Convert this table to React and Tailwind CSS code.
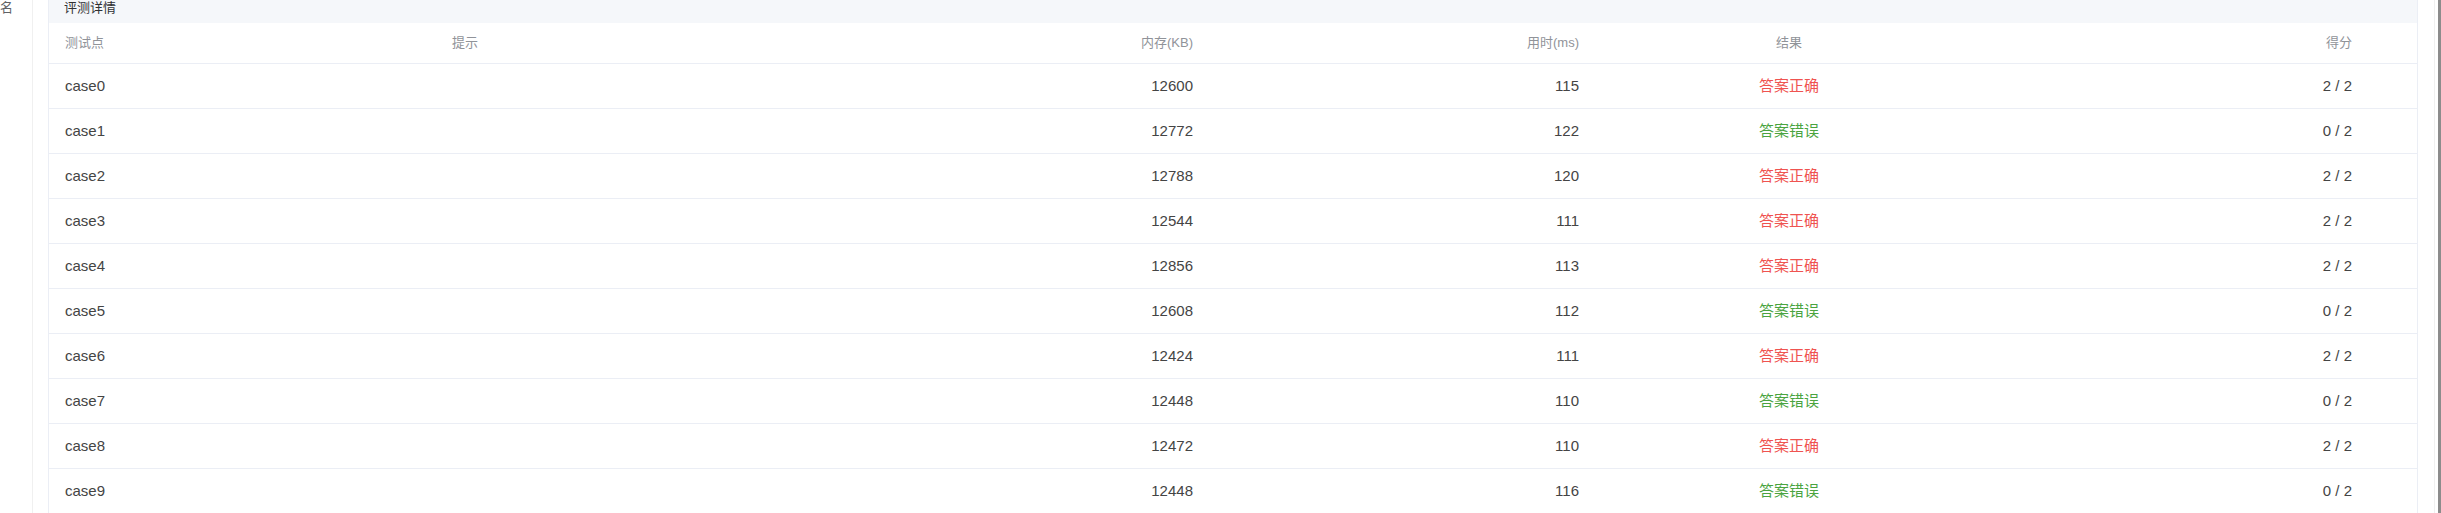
import React from "react";

const rows = [
  ["case0", "12600", "115", true, "2 / 2"],
  ["case1", "12772", "122", false, "0 / 2"],
  ["case2", "12788", "120", true, "2 / 2"],
  ["case3", "12544", "111", true, "2 / 2"],
  ["case4", "12856", "113", true, "2 / 2"],
  ["case5", "12608", "112", false, "0 / 2"],
  ["case6", "12424", "111", true, "2 / 2"],
  ["case7", "12448", "110", false, "0 / 2"],
  ["case8", "12472", "110", true, "2 / 2"],
  ["case9", "12448", "116", false, "0 / 2"],
];

const grid = "grid grid-cols-[387px_400px_373px_386px_388px_1fr] items-center";

export default function App() {
  return (
    <div
      className="h-[513px] w-[2441px] overflow-hidden bg-white flex"
      style={{ fontFamily: '"Liberation Sans", "Noto Sans CJK SC", sans-serif' }}
    >
      <div className="w-[33px] shrink-0 border-r border-[#f0f0f0] text-[13px] leading-[16px] text-[#606266]">
        名
      </div>
      <div className="w-[15px] shrink-0" />
      <div className="w-[2370px] shrink-0 border-x border-[#ebeef5]">
        <div className="h-[23px] bg-[#f5f7fa] pl-[15px] text-[13px] leading-[16px] text-[#303133]">
          评测详情
        </div>
        <div className={`${grid} h-[41px] border-b border-[#ebeef5] text-[13px] text-[#909399]`}>
          <div className="pl-[16px]">测试点</div>
          <div className="pl-[16px]">提示</div>
          <div className="pr-[16px] text-right">内存(KB)</div>
          <div className="pr-[16px] text-right">用时(ms)</div>
          <div className="text-center">结果</div>
          <div className="pr-[65px] text-right">得分</div>
        </div>
        {rows.map(([name, mem, time, ok, score]) => (
          <div
            key={name}
            className={`${grid} h-[45px] border-b border-[#ebeef5] text-[15px] text-[#444444]`}
          >
            <div className="pl-[16px]">{name}</div>
            <div className="pl-[16px]"></div>
            <div className="pr-[16px] text-right">{mem}</div>
            <div className="pr-[16px] text-right">{time}</div>
            <div className={`text-center ${ok ? "text-[#ef5350]" : "text-[#4aa440]"}`}>
              {ok ? "答案正确" : "答案错误"}
            </div>
            <div className="pr-[65px] text-right">{score}</div>
          </div>
        ))}
      </div>
      <div className="flex-1" />
      <div className="w-[7px] shrink-0 border-l border-[#f0f0f0] flex justify-end">
        <div className="w-[3px] h-full bg-[#8c8c8c]" />
      </div>
    </div>
  );
}
